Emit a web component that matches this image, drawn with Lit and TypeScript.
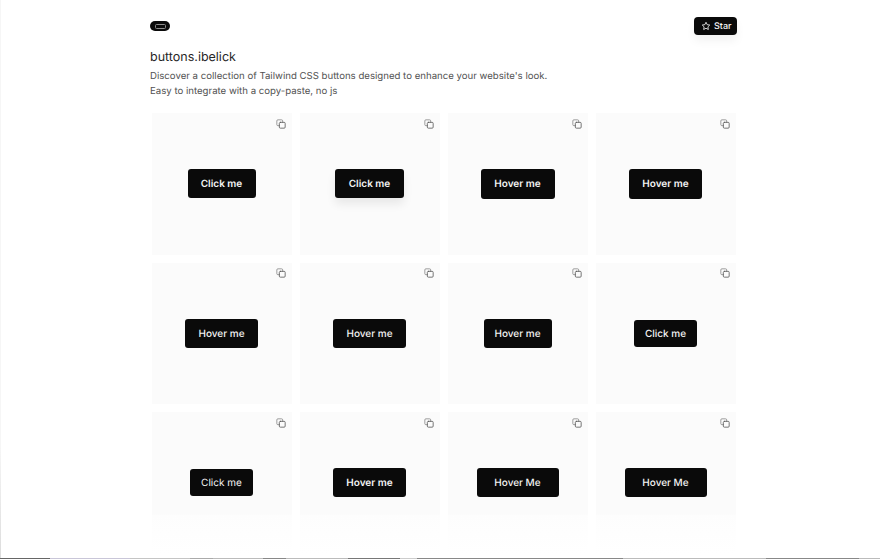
import { LitElement, html, css, svg } from "lit";
import { customElement } from "lit/decorators.js";

const cells: { label: string; w: number; h: number; weight: number; shadow?: boolean }[] = [
  { label: "Click me", w: 68, h: 29, weight: 600 },
  { label: "Click me", w: 69, h: 29, weight: 600, shadow: true },
  { label: "Hover me", w: 74, h: 30, weight: 600 },
  { label: "Hover me", w: 73, h: 30, weight: 600 },
  { label: "Hover me", w: 73, h: 29, weight: 500 },
  { label: "Hover me", w: 73, h: 29, weight: 500 },
  { label: "Hover me", w: 68, h: 29, weight: 500 },
  { label: "Click me", w: 63, h: 27, weight: 500 },
  { label: "Click me", w: 63, h: 27, weight: 400 },
  { label: "Hover me", w: 73, h: 29, weight: 600 },
  { label: "Hover Me", w: 82, h: 29, weight: 500 },
  { label: "Hover Me", w: 82, h: 29, weight: 500 },
];

const copyIcon = svg`<svg class="copy" viewBox="0 0 24 24" width="10" height="10" fill="none" stroke-width="2" stroke-linejoin="round" stroke-linecap="round"><path stroke="#8a8a8a" d="M16 8V4.5A2.5 2.5 0 0 0 13.5 2h-9A2.5 2.5 0 0 0 2 4.5v9A2.5 2.5 0 0 0 4.5 16H8"/><rect stroke="#5a5a5a" x="8" y="8" width="14" height="14" rx="2.5"/></svg>`;

@customElement("app-root")
export class AppRoot extends LitElement {
  static styles = css`
    :host {
      display: block;
      width: 880px;
      height: 559px;
      overflow: hidden;
      position: relative;
      background: #fff;
      font-family: Inter, "Liberation Sans", sans-serif;
      color: #171717;
      text-rendering: geometricPrecision;
    }
    .edge-left {
      position: absolute;
      left: 0;
      top: 0;
      bottom: 0;
      width: 1px;
      background: linear-gradient(#f6f6f6, #f6f6f6 80%, #dcdcdc);
    }
    .edge-bottom {
      position: absolute;
      left: 0;
      right: 0;
      bottom: 0;
      height: 1px;
      background: linear-gradient(
        90deg,
        #666 0 50px,
        #c9c6d8 50px 130px,
        #c4c4c4 130px 190px,
        #aaa 190px 213px,
        #bbb 213px 263px,
        #888 263px 286px,
        #bbb 286px 348px,
        #777 348px 400px,
        #ccc 400px 417px,
        #888 417px 623px,
        #bbb 623px 766px,
        #888 766px 859px,
        #bbb 859px
      );
    }
    .page {
      width: 588px;
      margin-left: 150px;
      padding-top: 17px;
    }
    .top {
      display: flex;
      justify-content: space-between;
      align-items: center;
      height: 18px;
    }
    .logo {
      width: 20px;
      height: 10px;
      border-radius: 5px;
      background: #0a0a0a;
      display: flex;
      align-items: center;
      justify-content: center;
    }
    .logo span {
      width: 11px;
      height: 5px;
      border: 1px solid #8c8c8c;
      border-radius: 1.5px;
      box-sizing: border-box;
    }
    .star {
      display: flex;
      align-items: center;
      gap: 3px;
      width: 43px;
      height: 18px;
      margin-right: 1px;
      box-sizing: border-box;
      padding-left: 7px;
      border-radius: 4px;
      background: #0a0a0a;
      color: #f5f5f5;
      font-size: 9px;
      font-weight: 500;
      box-shadow: 0 6px 10px rgba(0, 0, 0, 0.05);
    }
    h1 {
      margin: 14px 0 0;
      font-size: 12.5px;
      line-height: 18px;
      font-weight: 400;
      color: #262626;
    }
    p {
      margin: 2px 0 0;
      font-size: 9.65px;
      line-height: 15px;
      color: #525252;
    }
    .grid {
      display: grid;
      grid-template-columns: repeat(4, 140px);
      grid-auto-rows: 141.5px;
      gap: 8px;
      margin: 14px 0 0 1.5px;
    }
    .cell {
      position: relative;
      display: flex;
      align-items: center;
      justify-content: center;
      background: #fbfbfb;
    }
    .cell.last {
      background: linear-gradient(#fbfbfb, #fbfbfb 72%, #fdfdfd 73%, #fefefe 85%, #fff);
    }
    .copy {
      position: absolute;
      top: 5.5px;
      right: 6px;
    }
    .btn {
      display: flex;
      align-items: center;
      justify-content: center;
      box-sizing: border-box;
      padding-top: 1px;
      background: #0a0a0a;
      color: #f5f5f5;
      border-radius: 3px;
      font-size: 10px;
      white-space: nowrap;
    }
    .btn.shadow {
      box-shadow: 0 6px 10px rgba(0, 0, 0, 0.08);
    }
  `;

  render() {
    return html`
      <div class="page">
        <div class="top">
          <div class="logo"><span></span></div>
          <div class="star">
            <svg viewBox="0 0 24 24" width="10" height="10" fill="none" stroke="#f5f5f5" stroke-width="2" stroke-linejoin="round"><path d="M12 3l2.8 5.8 6.2.9-4.5 4.4 1.1 6.3L12 17.4l-5.6 3 1.1-6.3L3 9.7l6.2-.9z"/></svg>
            Star
          </div>
        </div>
        <h1>buttons.ibelick</h1>
        <p>Discover a collection of Tailwind CSS buttons designed to enhance your website's look.<br />Easy to integrate with a copy-paste, no js</p>
        <div class="grid">
          ${cells.map(
            (c, i) => html`<div class="cell ${i >= 8 ? "last" : ""}">
              ${copyIcon}
              <div
                class="btn ${c.shadow ? "shadow" : ""}"
                style="width:${c.w}px;height:${c.h}px;font-weight:${c.weight}"
              >
                ${c.label}
              </div>
            </div>`
          )}
        </div>
      </div>
      <div class="edge-left"></div>
      <div class="edge-bottom"></div>
    `;
  }
}
